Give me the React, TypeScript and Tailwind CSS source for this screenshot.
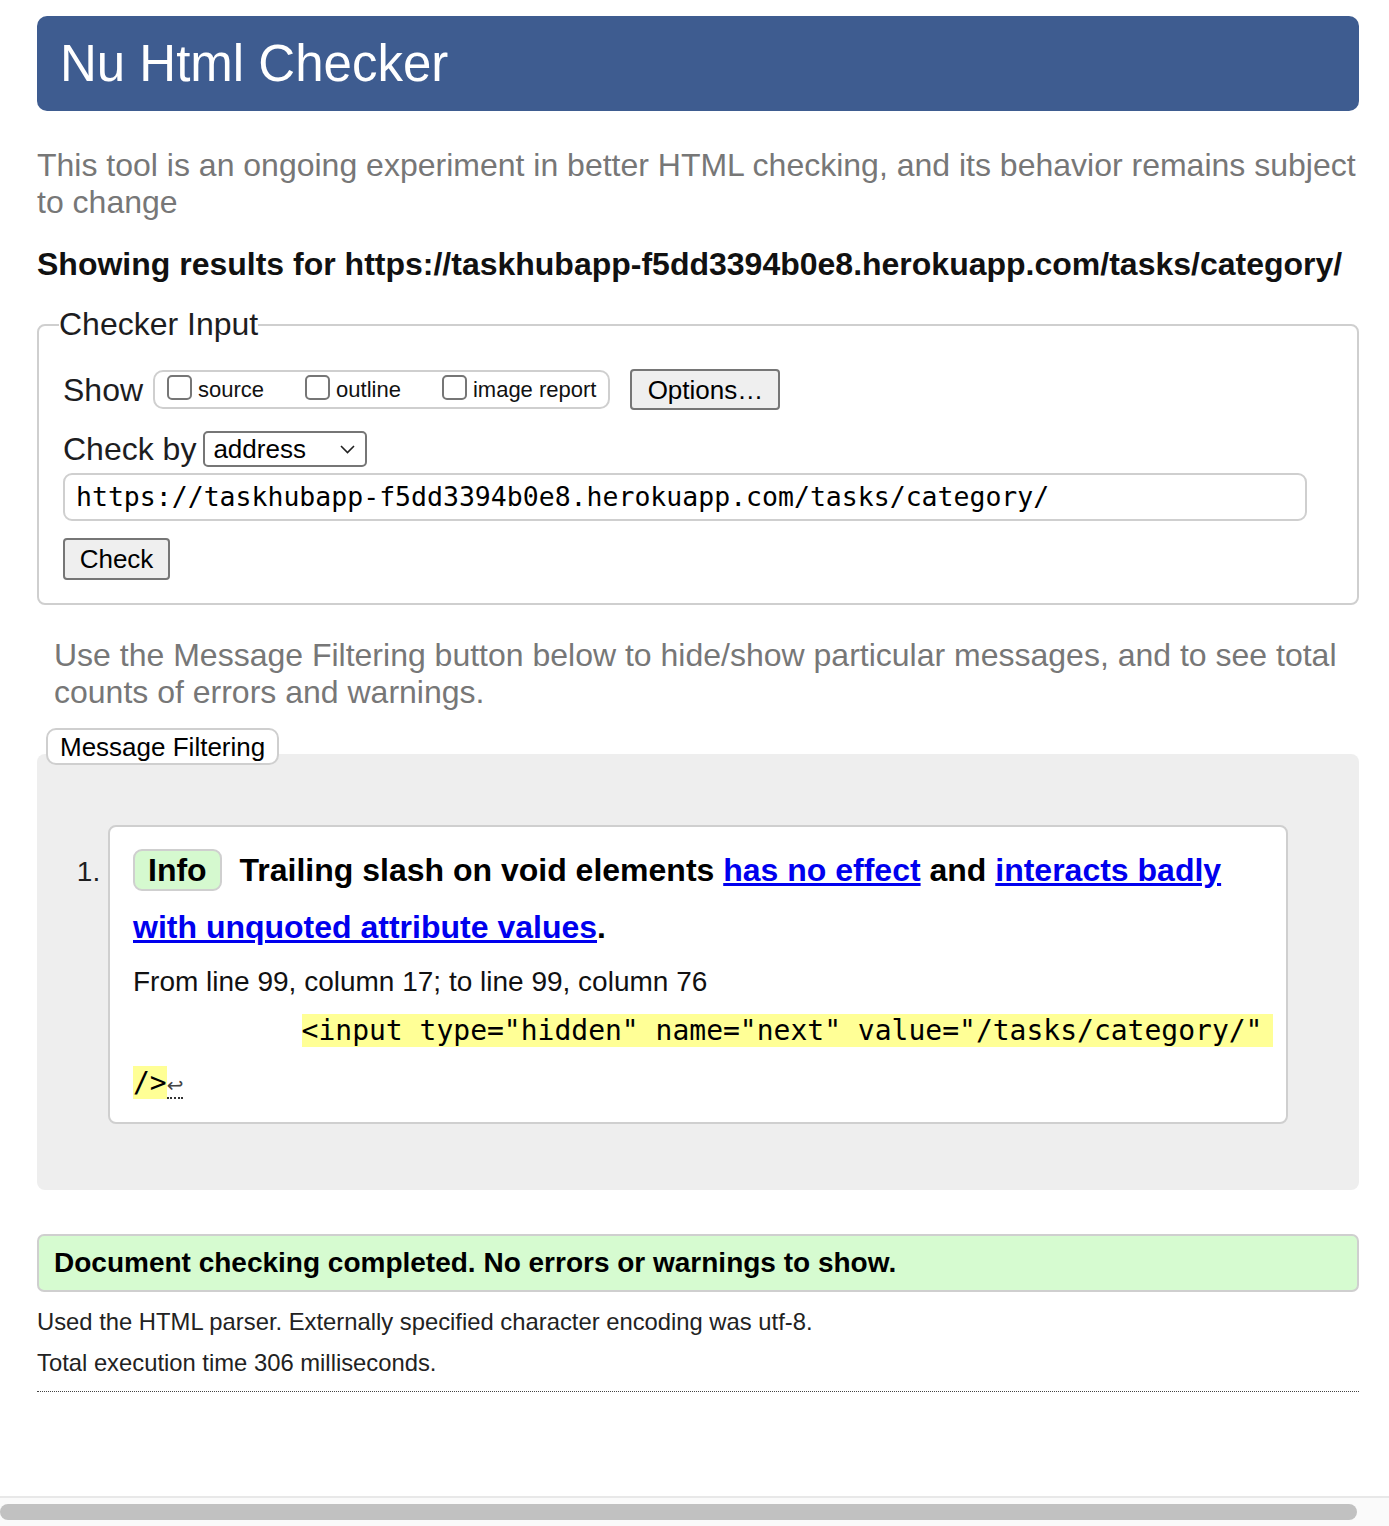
const Checkbox = ({ label }: { label: string }) => (
  <span className="flex items-center">
    <span className="mb-[4px] h-[25px] w-[25px] rounded-[5px] border-2 border-[#767676] bg-white" />
    <span className="ml-[6px] text-[22px] leading-[26px] text-[#111]">{label}</span>
  </span>
);

const GreyButton = ({ label, className }: { label: string; className: string }) => (
  <button
    className={`flex items-center justify-center rounded-[4px] border-2 border-[#767676] bg-[#efefef] text-[26px] leading-none text-black ${className}`}
  >
    {label}
  </button>
);

const App = () => {
  return (
    <div className="flex min-h-[1526px] flex-col bg-white font-['Liberation_Sans',Arial,sans-serif] text-[#1d1d1f]">
      <div className="pl-[37px] pr-[30px]">
        {/* header */}
        <header className="mt-[16px] flex h-[95px] items-center rounded-[10px] bg-[#3e5c90] pl-[23px]">
          <h1 className="text-[51px] leading-none text-white">Nu Html Checker</h1>
        </header>

        <p className="mt-[36px] text-[32px] leading-[37px] text-[#777]">
          This tool is an ongoing experiment in better HTML checking, and its behavior remains subject
          to change
        </p>

        <p className="mt-[25px] text-[32px] font-bold leading-[37px] text-[#111]">
          Showing results for https://taskhubapp-f5dd3394b0e8.herokuapp.com/tasks/category/
        </p>

        {/* checker input */}
        <fieldset className="mt-[23px] rounded-[8px] border-2 border-[#cfcfcf] pb-[23px] pl-[24px] pr-[50px]">
          <legend className="-ml-[4px] text-[32px] leading-[37px]">Checker Input</legend>

          <div className="mt-[26px] flex h-[41px] items-center">
            <span className="text-[32px] leading-none">Show</span>
            <div className="ml-[10px] flex h-[39px] items-center gap-[41px] rounded-[10px] border-2 border-[#cfcfcf] pl-[12px] pr-[12px]">
              <Checkbox label="source" />
              <Checkbox label="outline" />
              <Checkbox label="image report" />
            </div>
            <GreyButton label="Options…" className="ml-[20px] h-[41px] w-[150px]" />
          </div>

          <div className="mt-[19px] flex h-[40px] items-center">
            <span className="text-[32px] leading-none">Check by</span>
            <div className="ml-[7px] flex h-[36px] w-[164px] items-center justify-between rounded-[5px] border-2 border-[#767676] pl-[8px] pr-[10px]">
              <span className="text-[26px] leading-none text-black">address</span>
              <svg width="15" height="9" viewBox="0 0 15 9" fill="none">
                <path d="M1 1l6.5 6.5L14 1" stroke="#222" strokeWidth="1.6" />
              </svg>
            </div>
          </div>

          <div className="mt-[4px] flex h-[48px] items-center rounded-[9px] border-2 border-[#cfcfcf] pl-[11px]">
            <span className="font-['DejaVu_Sans_Mono',monospace] text-[26.5px] leading-none text-black">
              https://taskhubapp-f5dd3394b0e8.herokuapp.com/tasks/category/
            </span>
          </div>

          <GreyButton label="Check" className="mt-[17px] h-[42px] w-[107px]" />
        </fieldset>

        <p className="mt-[32px] px-[17px] text-[32px] leading-[37px] text-[#777]">
          Use the Message Filtering button below to hide/show particular messages, and to see total
          counts of errors and warnings.
        </p>

        <button className="relative z-10 ml-[9px] mt-[17px] flex h-[37px] items-center rounded-[10px] border-2 border-[#cfcfcf] bg-white pl-[12px] pr-[12px] text-[26px] leading-none text-black">
          Message Filtering
        </button>

        {/* messages */}
        <div className="-mt-[11px] rounded-[8px] bg-[#eeeeee] px-[71px] pb-[66px] pt-[71px]">
          <ol className="list-decimal text-[28px]">
            <li className="rounded-[8px] border-2 border-[#cfcfcf] bg-white pb-[11px] pl-[23px] pr-[13px] pt-[15px]">
              <p className="text-[32px] font-bold leading-[57px] text-black">
                <span className="mr-[9px] inline-block rounded-[9px] border-2 border-[#cfcfcf] bg-[#d5f9cf] px-[13px] text-[32px] leading-[38px]">
                  Info
                </span>{" "}
                Trailing slash on void elements{" "}
                <a className="text-[#0000ee] underline" href="#">
                  has no effect
                </a>{" "}
                and{" "}
                <a className="text-[#0000ee] underline" href="#">
                  interacts badly with unquoted attribute values
                </a>
                .
              </p>
              <p className="mt-[7px] text-[28px] leading-[37px] text-[#111]">
                From line 99, column 17; to line 99, column 76
              </p>
              <p className="mt-[5px] font-['DejaVu_Sans_Mono',monospace] text-[28px] leading-[52px] text-black">
                <span className="whitespace-pre">{"          "}</span>
                <mark className="whitespace-pre bg-[#ffff96] pr-[11px] text-black">
                  {'<input type="hidden" name="next" value="/tasks/category/"'}
                </mark>
                <br />
                <mark className="bg-[#ffff96] text-black">/&gt;</mark>
                <span className="border-b-2 border-dotted border-[#333] font-['DejaVu_Sans',sans-serif] text-[20px] text-[#444]">
                  ↩
                </span>
              </p>
            </li>
          </ol>
        </div>

        <div className="mt-[44px] flex h-[58px] items-center rounded-[7px] border-2 border-[#cfcfcf] bg-[#d6fbd0] pl-[15px]">
          <p className="text-[28px] font-bold leading-none text-black">
            Document checking completed. No errors or warnings to show.
          </p>
        </div>

        <p className="mt-[16px] text-[23.8px] leading-[28px] text-[#222]">
          Used the HTML parser. Externally specified character encoding was utf-8.
        </p>
        <p className="mt-[13px] text-[23.8px] leading-[28px] text-[#222]">
          Total execution time 306 milliseconds.
        </p>
        <div className="mt-[14px] border-b border-dotted border-[#444]" />
      </div>

      <div className="flex-1" />

      {/* horizontal scrollbar */}
      <div className="flex h-[30px] items-center border-t-2 border-[#e8e8e8] bg-[#fafafa]">
        <div className="h-[16px] w-[1357px] rounded-full bg-[#c1c1c1]" />
      </div>
    </div>
  );
};

export default App;
